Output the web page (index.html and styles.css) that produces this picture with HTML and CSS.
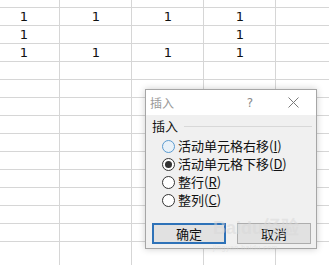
FILE: index.html
```html
<!DOCTYPE html>
<html lang="zh-CN">
<head>
<meta charset="utf-8">
<title>插入</title>
<link rel="stylesheet" href="styles.css">
</head>
<body>
<div class="sheet">
  <div class="cells">
    <div class="c"></div><div class="c"></div><div class="c"></div><div class="c"></div><div class="c"></div>
    <div class="c">1</div><div class="c">1</div><div class="c">1</div><div class="c">1</div><div class="c"></div>
    <div class="c">1</div><div class="c"></div><div class="c"></div><div class="c">1</div><div class="c"></div>
    <div class="c">1</div><div class="c">1</div><div class="c">1</div><div class="c">1</div><div class="c"></div>
  </div>

  <div class="dialog">
    <div class="titlebar">
      <span class="title">插入</span>
      <span class="help">?</span>
      <span class="close">
        <svg width="11" height="11" viewBox="0 0 11 11"><path d="M0.5 0.5 L10.5 10.5 M10.5 0.5 L0.5 10.5" stroke="#7a7a7a" stroke-width="1" fill="none"/></svg>
      </span>
    </div>
    <div class="body">
      <div class="group-head"><span class="group-label">插入</span><span class="group-line"></span></div>
      <div class="options">
        <div class="opt"><span class="radio hover"></span><span>活动单元格右移(<u>I</u>)</span></div>
        <div class="opt"><span class="radio checked"></span><span>活动单元格下移(<u>D</u>)</span></div>
        <div class="opt"><span class="radio"></span><span>整行(<u>R</u>)</span></div>
        <div class="opt"><span class="radio"></span><span>整列(<u>C</u>)</span></div>
      </div>
      <div class="buttons">
        <div class="btn default">确定</div>
        <div class="btn">取消</div>
      </div>
    </div>
  </div>

  <div class="watermark">
    <div class="wm-main">Baidu经验</div>
    <div class="wm-sub">jingyan.baidu.com</div>
  </div>
</div>
</body>
</html>
```

FILE: styles.css
```css
html, body {
  margin: 0;
  padding: 0;
  background: #fff;
}

.sheet {
  position: relative;
  width: 329px;
  height: 265px;
  overflow: hidden;
  background-color: #fff;
  background-image:
    repeating-linear-gradient(to right, transparent 0 71px, #d6d6d6 71px 72px),
    repeating-linear-gradient(to bottom, transparent 0 17px, #d6d6d6 17px 18px);
  background-position: -12px 0, 0 -10px;
}

.cells {
  display: grid;
  grid-template-columns: repeat(5, 72px);
  grid-auto-rows: 18px;
  margin-left: -12px;
  transform: translateY(-10px);
  font-family: "DejaVu Sans", sans-serif;
  font-size: 13px;
  color: #111;
}

.c {
  display: flex;
  align-items: center;
  justify-content: center;
  line-height: 18px;
}

.dialog {
  position: absolute;
  left: 145px;
  top: 89px;
  width: 172px;
  height: 160px;
  box-sizing: border-box;
  border: 1px solid #a6a6a6;
  background: #f0f0f0;
  box-shadow: 0 0 7px rgba(0, 0, 0, 0.2);
  display: flex;
  flex-direction: column;
  font-family: "Noto Sans CJK SC", sans-serif;
  font-size: 13px;
  color: #111;
}

.titlebar {
  height: 25px;
  background: #fff;
  display: flex;
  align-items: center;
  padding-left: 4px;
  color: #9a9a9a;
  font-size: 12px;
}

.title {
  flex: 1;
}

.help {
  width: 20px;
  text-align: center;
  color: #8a8a8a;
  font-family: "DejaVu Sans", sans-serif;
  font-size: 12px;
}

.close {
  width: 20px;
  margin-left: 23px;
  margin-right: 13px;
  display: flex;
  justify-content: center;
  align-items: center;
}

.body {
  flex: 1;
  padding: 4px 4px 0 6px;
  display: flex;
  flex-direction: column;
}

.group-head {
  display: flex;
  align-items: center;
  height: 14px;
  line-height: 14px;
}

.group-line {
  flex: 1;
  height: 1px;
  background: #d8d8d8;
  margin-left: 6px;
}

.options {
  margin-top: 4px;
  display: flex;
  flex-direction: column;
}

.opt {
  height: 18px;
  display: flex;
  align-items: center;
  padding-left: 10px;
  gap: 3px;
  line-height: 18px;
}

.opt u {
  text-underline-offset: 1px;
}

.radio {
  width: 13px;
  height: 13px;
  box-sizing: border-box;
  border: 1px solid #333;
  border-radius: 50%;
  background: #fff;
  display: flex;
  align-items: center;
  justify-content: center;
}

.radio.hover {
  border-color: #5a9bd0;
  background: #e8f1f8;
}

.radio.checked::after {
  content: "";
  width: 7px;
  height: 7px;
  border-radius: 50%;
  background: #333;
}

.buttons {
  margin-top: 14px;
  display: flex;
  gap: 11px;
}

.btn {
  width: 74px;
  height: 21px;
  box-sizing: border-box;
  border: 1px solid #adadad;
  background: #e1e1e1;
  display: flex;
  align-items: center;
  justify-content: center;
  font-size: 13px;
}

.btn.default {
  border: 2px solid #2e72b8;
}

.watermark {
  position: absolute;
  left: 213px;
  top: 218px;
  color: rgba(215, 215, 215, 0.5);
  font-family: "Liberation Sans", sans-serif;
  pointer-events: none;
}

.wm-main {
  font-size: 18px;
  font-weight: bold;
  line-height: 20px;
}

.wm-sub {
  margin-top: 6px;
  font-size: 7px;
  line-height: 8px;
  letter-spacing: 0.5px;
}
```
